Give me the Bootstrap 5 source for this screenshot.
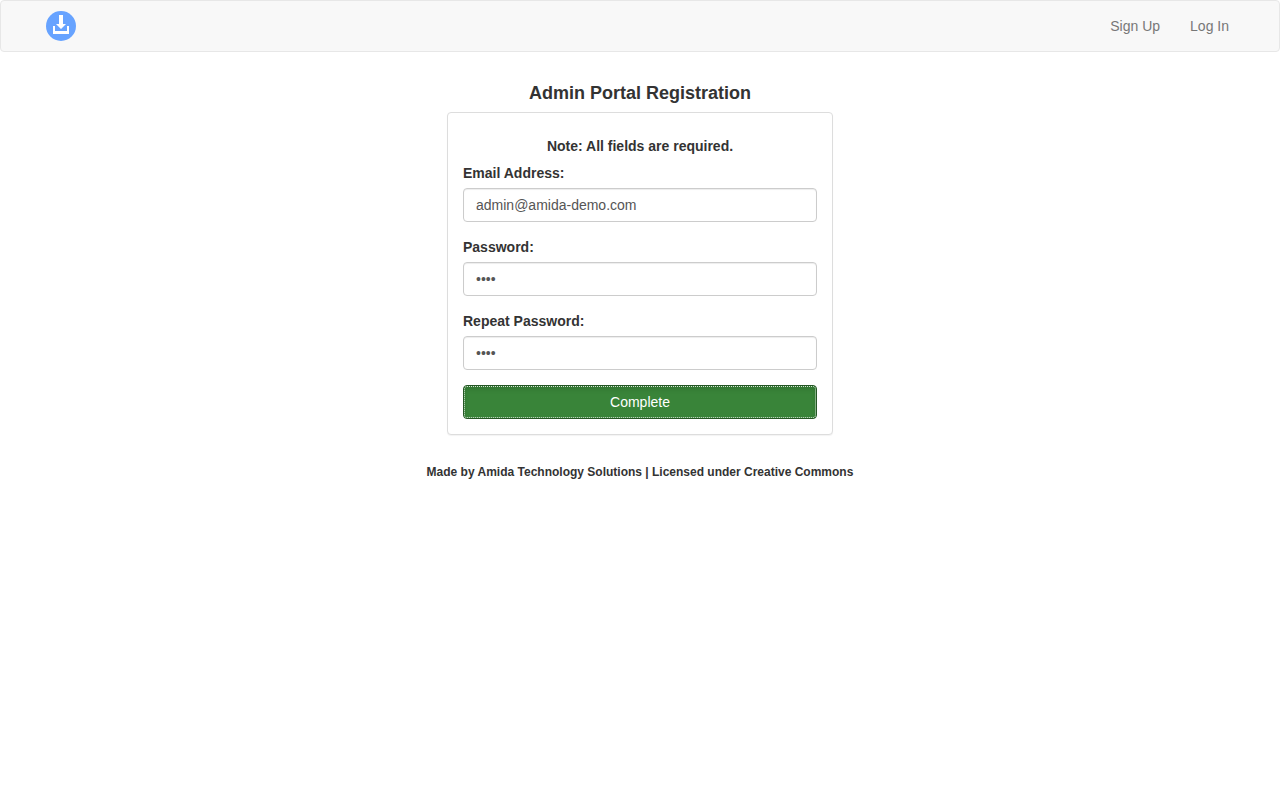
<!DOCTYPE html>
<html lang="en">
<head>
<meta charset="utf-8">
<meta name="viewport" content="width=device-width, initial-scale=1">
<title>Admin Portal Registration</title>
<link href="https://cdn.jsdelivr.net/npm/bootstrap@5.3.0/dist/css/bootstrap.min.css" rel="stylesheet">
<script defer src="https://cdn.jsdelivr.net/npm/bootstrap@5.3.0/dist/js/bootstrap.bundle.min.js"></script>
<style>
  body { font: 14px/20px "Liberation Sans", Arial, sans-serif; color: #333; background: #fff; }
  .topbar { background: #f8f8f8; border: 1px solid #e7e7e7; border-radius: 4px; min-height: 52px; padding: 0 35px; }
  .topbar .navbar-brand { padding: 10px; margin: 0; line-height: 0; }
  .topbar .navbar-nav .nav-link { color: #777; padding: 15px; }
  h1 { font-size: 18px; line-height: 20px; font-weight: 700; margin: 31px 0 9px; }
  .signup { max-width: 386px; }
  .signup .card { border: 1px solid #ddd; border-radius: 4px; box-shadow: 0 1px 1px rgba(0,0,0,.05); margin-bottom: 30px; }
  .signup .card-body { padding: 15px; }
  h2 { font-size: 14px; line-height: 15px; font-weight: 700; margin: 11px 0 9px; }
  .form-label { font-weight: 700; margin-bottom: 5px; display: block; }
  .field { margin-bottom: 15px; }
  .form-control { height: 34px; padding: 6px 12px; font-size: 14px; line-height: 20px; color: #555; border: 1px solid #ccc; border-radius: 4px; box-shadow: inset 0 1px 1px rgba(0,0,0,.075); }
  .btn-complete, .btn-complete:hover { height: 34px; padding: 6px 12px; font-size: 14px; line-height: 20px; color: #fff; background: #398439; border: 1px solid #255625; border-radius: 4px; box-shadow: inset 0 3px 5px rgba(0,0,0,.125); outline: 1px dotted #d5e6d5; outline-offset: -2px; }
  footer { font-size: 12px; line-height: 14px; font-weight: 700; }
</style>
</head>
<body>
<nav class="navbar navbar-expand topbar">
  <a class="navbar-brand" href="#" aria-label="Home">
    <svg width="30" height="30" viewBox="0 0 30 30" aria-hidden="true">
      <circle cx="15" cy="15" r="15" fill="#67a3ff"/>
      <path d="M13 4h4v9h3l-5 5-5-5h3zM7 15h2v5h12v-5h2v8H7z" fill="#fff"/>
    </svg>
  </a>
  <div class="navbar-nav ms-auto">
    <a class="nav-link" href="#">Sign Up</a>
    <a class="nav-link" href="#">Log In</a>
  </div>
</nav>
<main class="signup mx-auto">
  <h1 class="text-center">Admin Portal Registration</h1>
  <div class="card">
    <form class="card-body">
      <h2 class="text-center">Note: All fields are required.</h2>
      <div class="field">
        <label class="form-label" for="email">Email Address:</label>
        <input class="form-control" type="email" id="email" value="admin@amida-demo.com">
      </div>
      <div class="field">
        <label class="form-label" for="password">Password:</label>
        <input class="form-control" type="password" id="password" value="demo">
      </div>
      <div class="field">
        <label class="form-label" for="repeat">Repeat Password:</label>
        <input class="form-control" type="password" id="repeat" value="demo">
      </div>
      <button class="btn btn-complete w-100 d-block" type="button">Complete</button>
    </form>
  </div>
</main>
<footer class="text-center">Made by Amida Technology Solutions | Licensed under Creative Commons</footer>
</body>
</html>
